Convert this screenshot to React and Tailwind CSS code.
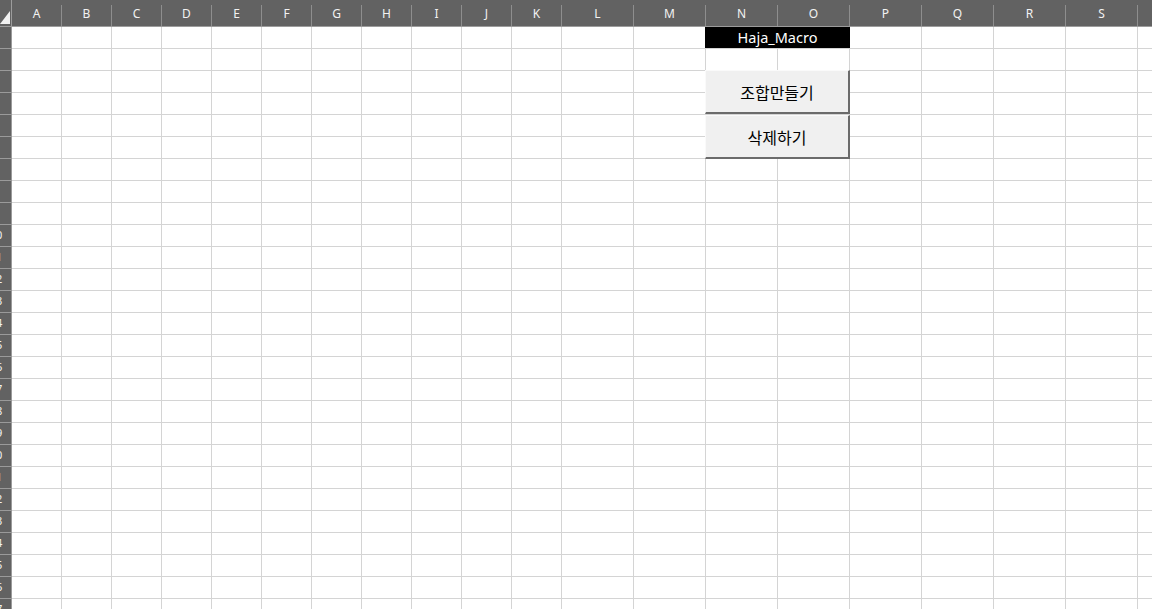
import React from "react";

const narrowCols = ["A", "B", "C", "D", "E", "F", "G", "H", "I", "J", "K"];
const wideCols = ["L", "M", "N", "O", "P", "Q", "R", "S", "T"];
const cols = [
  ...narrowCols.map((c) => ({ name: c, w: "w-[50px]" })),
  ...wideCols.map((c) => ({ name: c, w: "w-[72px]" })),
];
const rows = Array.from({ length: 27 }, (_, i) => i + 1);

function HeaderCell({ name, w }) {
  return (
    <div className={`${w} shrink-0 h-full flex`}>
      <div className="flex-1 flex items-center justify-center pt-[1px] text-[12px] text-[#f2f2f2]">
        {name === "T" ? "" : name}
      </div>
      <div className="w-px h-[21px] self-end bg-[#8e8e8e]" />
    </div>
  );
}

function Row({ n }) {
  return (
    <div className="flex h-[22px] shrink-0">
      <div className="w-[12px] shrink-0 h-full flex justify-end overflow-hidden bg-[#626262] border-r border-b border-[#9a9a9a]">
        <div className="w-[30px] shrink-0 flex items-center justify-center text-[11px] text-[#f3f3f3]">
          {n}
        </div>
      </div>
      {cols.map((c) => (
        <div
          key={c.name}
          className={`${c.w} shrink-0 h-full bg-white border-r border-b border-[#d4d4d4]`}
        />
      ))}
    </div>
  );
}

export default function App() {
  return (
    <div
      className="relative w-[1152px] h-[609px] overflow-hidden bg-white"
      style={{ fontFamily: "'Noto Sans', 'Open Sans', 'Noto Sans CJK KR', sans-serif" }}
    >
      <div className="flex flex-col">
        {/* column header */}
        <div className="flex h-[27px] shrink-0 bg-[#626262] border-b border-[#9c9c9c]">
          <div className="w-[12px] shrink-0 h-full flex items-end border-r border-[#9c9c9c]">
            <svg width="11" height="26" viewBox="0 0 11 26" className="block">
              <polygon points="10,11 10,24 0,24" fill="#f2f2f2" />
            </svg>
          </div>
          {cols.map((c) => (
            <HeaderCell key={c.name} name={c.name} w={c.w} />
          ))}
        </div>
        {rows.map((n) => (
          <Row key={n} n={n} />
        ))}
      </div>

      {/* merged title cell N1:O1 */}
      <div className="absolute left-[705px] top-[27px] w-[145px] h-[21px] bg-black flex items-center justify-center text-[14.5px] text-white">
        Haja_Macro
      </div>

      {/* form buttons floating over the sheet */}
      <div className="absolute left-[705px] top-[70px] w-[145px] flex flex-col gap-[1px]">
        <button
          className="h-[44px] w-full bg-[#f0f0f0] border-t border-l border-[#fafafa] border-r-2 border-b-2 border-r-[#6b6b6b] border-b-[#6b6b6b] text-[16px] text-black flex items-center justify-center"
          style={{ fontFamily: "'Noto Sans CJK KR', sans-serif" }}
        >
          조합만들기
        </button>
        <button
          className="h-[44px] w-full bg-[#f0f0f0] border-t border-l border-[#fafafa] border-r-2 border-b-2 border-r-[#6b6b6b] border-b-[#6b6b6b] text-[16px] text-black flex items-center justify-center"
          style={{ fontFamily: "'Noto Sans CJK KR', sans-serif" }}
        >
          삭제하기
        </button>
      </div>
    </div>
  );
}
